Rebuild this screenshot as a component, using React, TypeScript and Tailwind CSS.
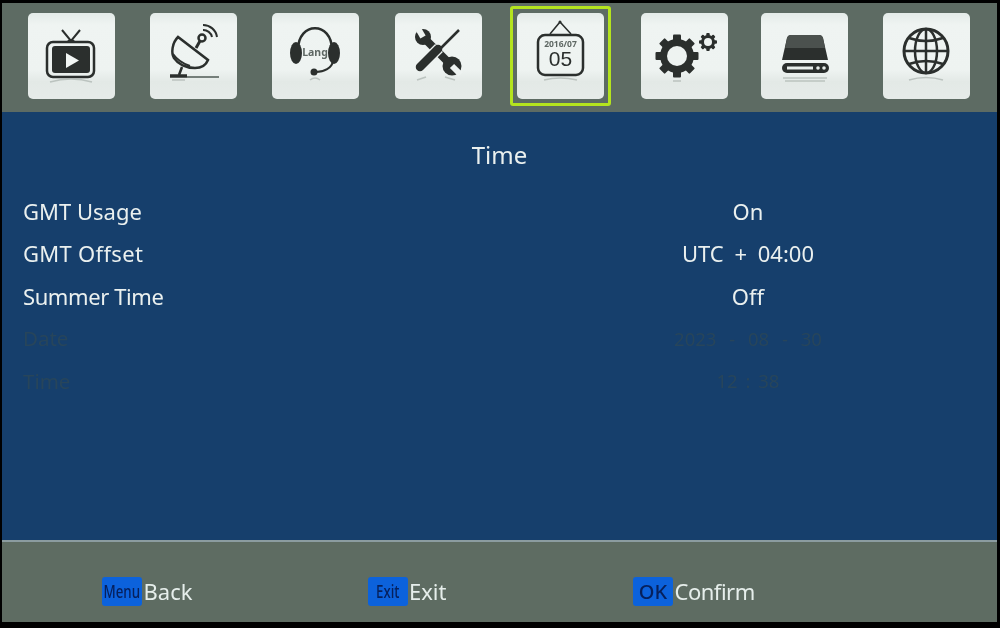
const ink = "#2b2f2d";
const tile = "#eef3f1";

function Tile({ selected, className, children }: { selected?: boolean; className?: string; children: React.ReactNode }) {
  return (
    <div className={"relative w-[87px] h-[86px] rounded-[5px] bg-[linear-gradient(180deg,#e4ebe8_0%,#eff4f2_14%,#eef3f1_66%,#e3e9e6_80%,#e6ebe9_100%)] " + (className ?? "")}>
      {selected && <div className="absolute -top-[7px] -bottom-[7px] -left-[7px] -right-[7px] border-[3px] border-[#b4e41e] rounded-[3px]" />}
      <svg viewBox="0 0 87 86" className="w-full h-full">
        {children}
      </svg>
    </div>
  );
}

function Reflection({ d }: { d: string }) {
  return <path d={d} fill="none" stroke="#a9b2ae" strokeWidth="1.5" opacity="0.7" />;
}

function TvIcon() {
  return (
    <g>
      <path d="M34 17 L43 28 L52 17" fill="none" stroke={ink} strokeWidth="2" />
      <path d="M39 28 Q43 24 47 28 Z" fill={ink} />
      <rect x="19" y="29" width="47" height="35" rx="6" fill="none" stroke={ink} strokeWidth="2.5" />
      <rect x="24" y="33" width="38" height="27" rx="3" fill={ink} />
      <path d="M38 40 L51 47.5 L38 55 Z" fill="#f2f6f4" />
      <Reflection d="M22 69 Q43 63 64 69" />
    </g>
  );
}

function DishIcon() {
  return (
    <g fill="none" stroke={ink}>
      <path d="M46 35 L50 28" strokeWidth="3" />
      <circle cx="52" cy="25" r="3.5" strokeWidth="2.5" />
      <path d="M53 17 A9 9 0 0 1 62 24" strokeWidth="2" />
      <path d="M53 12 A14 14 0 0 1 67 24" strokeWidth="2" />
      <path d="M28 24 C22 30 21 40 24 45 C28 51 36 55 45 55 C52 55 56 52 58 47 Z" strokeWidth="2.5" />
      <path d="M23 41 C28 48 34 51 40 53" strokeWidth="2" />
      <path d="M32 54 L29 62" strokeWidth="2.5" />
      <path d="M20 63 L37 63" strokeWidth="3.5" />
      <path d="M37 64 L69 64" strokeWidth="1.5" stroke="#4f5a55" />
      <Reflection d="M22 67 L35 67" />
    </g>
  );
}

function HeadsetIcon() {
  return (
    <g>
      <path d="M26 37 C26 8 60 8 60 37" fill="none" stroke={ink} strokeWidth="2.5" />
      <ellipse cx="24" cy="40" rx="6" ry="11" fill={ink} />
      <ellipse cx="62" cy="40" rx="6" ry="11" fill={ink} />
      <text x="43" y="43" textAnchor="middle" fontSize="10.5" fontWeight="700" fill="#5f6864" fontFamily="'Noto Sans', sans-serif">
        Lang
      </text>
      <path d="M61 48 C60 55 52 59 44 59" fill="none" stroke={ink} strokeWidth="2" />
      <circle cx="42" cy="59" r="3.5" fill={ink} />
      <Reflection d="M38 67 Q43 63 48 67" />
    </g>
  );
}

function ToolsIcon() {
  return (
    <g>
      <path d="M30 26 L55 51" stroke={ink} strokeWidth="8" />
      <circle cx="28" cy="24" r="8" fill={ink} />
      <rect x="25" y="13" width="6" height="11" fill={tile} transform="rotate(-30 28 24)" />
      <circle cx="57" cy="53" r="9.5" fill={ink} />
      <rect x="54" y="53" width="6" height="12" fill={tile} transform="rotate(-45 57 53)" />
      <path d="M64 17 L44 37" stroke={ink} strokeWidth="2.5" />
      <path d="M44 35 L25 54" stroke={tile} strokeWidth="11" />
      <path d="M43 36 L25 54" stroke={ink} strokeWidth="8.5" strokeLinecap="round" />
      <Reflection d="M22 67 L31 64 M50 64 L60 67" />
    </g>
  );
}

function CalendarIcon() {
  return (
    <g>
      <path d="M33 21 L43 9 L54 21" fill="none" stroke={ink} strokeWidth="1.5" />
      <circle cx="43" cy="9" r="1.5" fill={ink} />
      <rect x="21" y="22" width="45" height="40" rx="7" fill="none" stroke={ink} strokeWidth="2.5" />
      <text x="43.5" y="34" textAnchor="middle" fontSize="8.5" fontWeight="700" fill="#5f6864" fontFamily="'Noto Sans', sans-serif">
        2016/07
      </text>
      <text x="43.5" y="53" textAnchor="middle" fontSize="21" fill={ink} fontFamily="'Liberation Sans', sans-serif">
        05
      </text>
      <Reflection d="M27 67 Q43 63 60 67" />
    </g>
  );
}

function Gear({ cx, cy, r, body, hole, tooth }: { cx: number; cy: number; r: number; body: number; hole: number; tooth: number }) {
  const angles = [0, 45, 90, 135, 180, 225, 270, 315];
  return (
    <g fill={ink}>
      {angles.map((a) => (
        <rect
          key={a}
          x={cx - tooth / 2}
          y={cy - r}
          width={tooth}
          height={r - hole}
          rx={1}
          transform={`rotate(${a} ${cx} ${cy})`}
        />
      ))}
      <circle cx={cx} cy={cy} r={body} />
      <circle cx={cx} cy={cy} r={hole} fill={tile} />
    </g>
  );
}

function GearsIcon() {
  return (
    <g>
      <Gear cx={36} cy={43} r={21.5} body={17} hole={10} tooth={8} />
      <Gear cx={67} cy={29} r={9} body={7} hole={4} tooth={3.5} />
      <Reflection d="M32 68 L40 68" />
    </g>
  );
}

function DriveIcon() {
  return (
    <g>
      <path d="M30 22 H58 Q61 22 62 25 L67 47 H21 L26 25 Q27 22 30 22 Z" fill={ink} />
      <path d="M30 22 H58 Q61 22 62 25 L64 35 H24 L26 25 Q27 22 30 22 Z" fill="#4b514e" />
      <rect x="21" y="50" width="47" height="10" rx="5" fill={ink} />
      <rect x="26" y="53.5" width="26" height="3" fill="#e8eeeb" />
      <circle cx="57" cy="55" r="1.8" fill="#e8eeeb" />
      <circle cx="63" cy="55" r="1.8" fill="#e8eeeb" />
      <Reflection d="M22 65 H66 M24 68 H64" />
    </g>
  );
}

function GlobeIcon() {
  return (
    <g fill="none" stroke={ink} strokeWidth="2.5">
      <circle cx="43" cy="38" r="22" strokeWidth="3" />
      <ellipse cx="43" cy="38" rx="11" ry="22" />
      <path d="M43 16 V60 M21 38 H65" />
      <path d="M26 25 Q43 31 60 25 M26 51 Q43 45 60 51" />
      <Reflection d="M26 67 Q43 62 60 67" />
    </g>
  );
}

function Row({ label, value, dim, className, valueClass }: { label: string; value: string; dim?: boolean; className?: string; valueClass?: string }) {
  return (
    <div className={"flex h-[42.5px] items-center " + (dim ? "text-[#27455b]" : "text-[22px] text-[#eaf0ef]")}>
      <div className={"flex-1 pl-[21px] " + (dim ? "text-[20.5px] " : "") + (className ?? "")}>{label}</div>
      <div className={"w-[498px] text-center " + (dim ? "text-[18.5px] " : "") + (valueClass ?? "")}>{value}</div>
    </div>
  );
}

function Hint({ keyName, label, narrow, className }: { keyName: string; label: string; narrow?: boolean; className?: string }) {
  return (
    <div className="w-[265.5px] flex items-center gap-[1.5px]">
      <div className="w-[40px] h-[29px] rounded-[3px] bg-[#0c62dc] text-[#06205c] flex items-center justify-center font-medium">
        <span className={narrow ? "text-[18px] inline-block scale-x-[0.74]" : "text-[20px]"}>{keyName}</span>
      </div>
      <span className={"text-[22px] text-[#e6eeeb] " + (className ?? "")}>{label}</span>
    </div>
  );
}

export default function App() {
  return (
    <div className="w-[1000px] h-[628px] bg-black pt-[3px] pb-[6px] pl-[2px] pr-[3px] font-['Noto_Sans',sans-serif] overflow-hidden">
      <div className="h-full flex flex-col blur-[0.4px]">
        <div className="h-[109px] bg-[#5d6b63] flex items-start justify-between pt-[10px] pl-[26px] pr-[27px]">
          <Tile><TvIcon /></Tile>
          <Tile><DishIcon /></Tile>
          <Tile><HeadsetIcon /></Tile>
          <Tile className="ml-[1px] -mr-[1px]"><ToolsIcon /></Tile>
          <Tile selected><CalendarIcon /></Tile>
          <Tile className="ml-[2px] -mr-[2px]"><GearsIcon /></Tile>
          <Tile><DriveIcon /></Tile>
          <Tile><GlobeIcon /></Tile>
        </div>
        <div className="flex-1 bg-[#163f6c] pt-[24px]">
          <div className="h-[38px] flex items-center justify-center text-[24px] text-[#eaf0ef]">Time</div>
          <div className="mt-[16px]">
            <Row label="GMT Usage" value="On" />
            <Row label="GMT Offset" value="UTC + 04:00" className="tracking-[0.3px]" valueClass="[word-spacing:5px]" />
            <Row label="Summer Time" value="Off" className="tracking-[-0.4px]" />
            <Row label="Date" value="2023 - 08 - 30" dim valueClass="[word-spacing:8px]" />
            <Row label="Time" value="12 : 38" dim valueClass="[word-spacing:3px]" />
          </div>
        </div>
        <div className="h-[82px] bg-[#5e6c62] border-t-2 border-[#8b9ca0] flex items-center pl-[100px] pt-[19px]">
          <Hint keyName="Menu" label="Back" narrow />
          <Hint keyName="Exit" label="Exit" narrow />
          <Hint keyName="OK" label="Confirm" className="tracking-[-0.5px]" />
        </div>
      </div>
    </div>
  );
}
